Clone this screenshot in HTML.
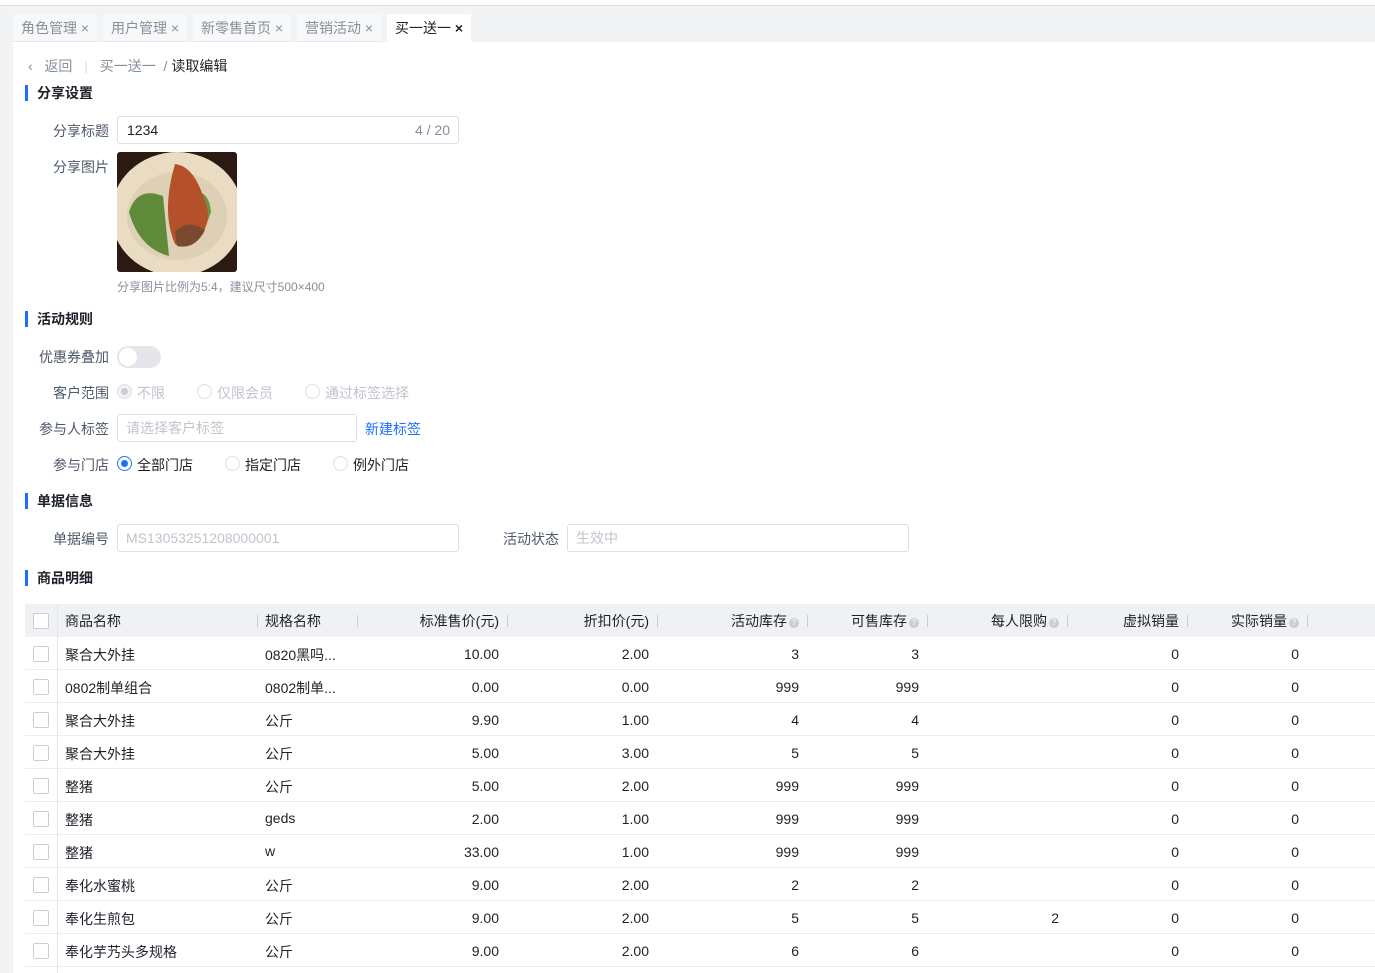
<!DOCTYPE html>
<html><head><meta charset="utf-8"><style>
*{margin:0;padding:0;box-sizing:border-box}
body{width:1375px;height:973px;overflow:hidden;background:#f2f3f5;font-family:"Liberation Sans","Noto Sans CJK SC",sans-serif;font-size:14px;color:#1d2129;position:relative}
.a{position:absolute;white-space:nowrap}
.tab{position:absolute;top:14px;height:28px;background:#f7f8fa;border-bottom:1px solid #e5e6eb;color:#86909c;font-size:14px;line-height:28px;padding-left:8px}
.tab.on{background:#fff;color:#1d2129;border-bottom:none}
.main{position:absolute;left:13px;top:42px;width:1362px;height:931px;background:#fff}
.sec{position:absolute;left:25px;font-weight:bold;font-size:14px;padding-left:12px;line-height:16px}
.sec:before{content:"";position:absolute;left:0;top:0;width:3px;height:16px;background:#1e6fff}
.lbl{position:absolute;text-align:right;width:100px;color:#4e5969}
.inp{position:absolute;border:1px solid #dcdfe6;border-radius:3px;height:28px;line-height:26px;padding-left:8px;color:#c0c4cc}
.rad{position:absolute;width:15px;height:15px;border:1px solid #dcdfe6;border-radius:50%;background:#fff}
.th{position:absolute;top:605px;height:33px;line-height:33px}
.cb{position:absolute;left:33px;width:16px;height:16px;border:1px solid #c9cdd4;border-radius:2px;background:#fff}
.sep{position:absolute;width:1px;height:12px;background:#c9cdd4;top:615px}
.q{display:inline-block;width:10px;height:10px;border-radius:50%;background:#c9cdd4;color:#fff;font-size:8px;line-height:10px;text-align:center;vertical-align:1px;margin-left:2px}
</style></head><body>
<div class="a" style="left:0;top:0;width:1375px;height:6px;background:#fff;border-bottom:1px solid #dcdfe6"></div>
<div class="tab" style="left:13px;width:84px">角色管理 ×</div>
<div class="tab" style="left:103px;width:84px">用户管理 ×</div>
<div class="tab" style="left:193px;width:98px">新零售首页 ×</div>
<div class="tab" style="left:297px;width:84px">营销活动 ×</div>
<div class="tab on" style="left:387px;width:84px">买一送一 <b>×</b></div>
<div class="main"></div>

<div class="a" style="left:28px;top:56px;color:#86909c">‹&nbsp;&nbsp; 返回 <span style="color:#dcdfe6;margin:0 8px">|</span> 买一送一 &nbsp;/ <span style="color:#1d2129">读取编辑</span></div>

<div class="sec" style="top:85px">分享设置</div>
<div class="lbl" style="left:9px;top:121px">分享标题</div>
<div class="inp" style="left:117px;top:116px;width:342px;color:#1d2129;padding-left:9px">1234<span style="position:absolute;right:8px;color:#86909c">4 / 20</span></div>
<div class="lbl" style="left:9px;top:157px">分享图片</div>
<svg class="a" style="left:117px;top:152px" width="120" height="120" viewBox="0 0 120 120">
<rect width="120" height="120" rx="3" fill="#2a1a12"/>
<ellipse cx="60" cy="62" rx="66" ry="62" fill="#e9dcc3"/>
<ellipse cx="60" cy="64" rx="50" ry="44" fill="#ddd0b4"/>
<path d="M12 60 Q20 34 46 44 L52 104 Q22 96 12 60Z" fill="#5f8a3a"/>
<path d="M72 40 Q92 36 94 60 L86 82 Z" fill="#6a9440"/>
<path d="M58 12 Q76 14 86 44 Q96 64 86 80 Q72 100 58 92 Q44 60 58 12Z" fill="#b4502a"/>
<path d="M58 80 Q70 66 88 78 Q78 98 60 94Z" fill="#7a4a30"/>
</svg>
<div class="a" style="left:117px;top:278px;font-size:12px;color:#86909c">分享图片比例为5:4，建议尺寸500×400</div>

<div class="sec" style="top:311px">活动规则</div>
<div class="lbl" style="left:9px;top:347px">优惠券叠加</div>
<div class="a" style="left:117px;top:346px;width:44px;height:22px;border-radius:11px;background:#e5e6eb"><div style="position:absolute;left:2px;top:2px;width:18px;height:18px;border-radius:50%;background:#fff"></div></div>
<div class="lbl" style="left:9px;top:383px">客户范围</div>
<div class="rad" style="left:117px;top:384px;background:#f2f3f5"><div style="position:absolute;left:3px;top:3px;width:7px;height:7px;border-radius:50%;background:#c9cdd4"></div></div>
<div class="a" style="left:137px;top:383px;color:#c0c4cc">不限</div>
<div class="rad" style="left:197px;top:384px"></div><div class="a" style="left:217px;top:383px;color:#c0c4cc">仅限会员</div>
<div class="rad" style="left:305px;top:384px"></div><div class="a" style="left:325px;top:383px;color:#c0c4cc">通过标签选择</div>
<div class="lbl" style="left:9px;top:419px">参与人标签</div>
<div class="inp" style="left:117px;top:414px;width:240px">请选择客户标签</div>
<div class="a" style="left:365px;top:419px;color:#1e6fff">新建标签</div>
<div class="lbl" style="left:9px;top:455px">参与门店</div>
<div class="rad" style="left:117px;top:456px;border-color:#1e6fff"><div style="position:absolute;left:3px;top:3px;width:7px;height:7px;border-radius:50%;background:#1e6fff"></div></div>
<div class="a" style="left:137px;top:455px">全部门店</div>
<div class="rad" style="left:225px;top:456px"></div><div class="a" style="left:245px;top:455px">指定门店</div>
<div class="rad" style="left:333px;top:456px"></div><div class="a" style="left:353px;top:455px">例外门店</div>

<div class="sec" style="top:493px">单据信息</div>
<div class="lbl" style="left:9px;top:529px">单据编号</div>
<div class="inp" style="left:117px;top:524px;width:342px">MS13053251208000001</div>
<div class="lbl" style="left:459px;top:529px">活动状态</div>
<div class="inp" style="left:567px;top:524px;width:342px">生效中</div>

<div class="sec" style="top:570px">商品明细</div>

<div class="a" style="left:25px;top:604px;width:1350px;height:33px;background:#f0f1f4"></div>
<div class="a" style="left:57px;top:604px;width:1px;height:369px;background:#e5e6eb"></div>
<div class="cb" style="top:613px"></div>
<div class="th" style="left:65px">商品名称</div>
<div class="sep" style="left:257px"></div>
<div class="th" style="left:265px">规格名称</div>
<div class="sep" style="left:357px"></div>
<div class="th" style="left:399px;width:100px;text-align:right">标准售价(元)</div><div class="sep" style="left:507px"></div>
<div class="th" style="left:549px;width:100px;text-align:right">折扣价(元)</div><div class="sep" style="left:657px"></div>
<div class="th" style="left:699px;width:100px;text-align:right">活动库存<span class="q">?</span></div><div class="sep" style="left:807px"></div>
<div class="th" style="left:819px;width:100px;text-align:right">可售库存<span class="q">?</span></div><div class="sep" style="left:927px"></div>
<div class="th" style="left:959px;width:100px;text-align:right">每人限购<span class="q">?</span></div><div class="sep" style="left:1067px"></div>
<div class="th" style="left:1079px;width:100px;text-align:right">虚拟销量</div><div class="sep" style="left:1187px"></div>
<div class="th" style="left:1199px;width:100px;text-align:right">实际销量<span class="q">?</span></div><div class="sep" style="left:1307px"></div>

<div id="rows"></div>
<script>
var d=[["聚合大外挂","0820黑吗...","10.00","2.00","3","3",""],
["0802制单组合","0802制单...","0.00","0.00","999","999",""],
["聚合大外挂","公斤","9.90","1.00","4","4",""],
["聚合大外挂","公斤","5.00","3.00","5","5",""],
["整猪","公斤","5.00","2.00","999","999",""],
["整猪","geds","2.00","1.00","999","999",""],
["整猪","w","33.00","1.00","999","999",""],
["奉化水蜜桃","公斤","9.00","2.00","2","2",""],
["奉化生煎包","公斤","9.00","2.00","5","5","2"],
["奉化芋艿头多规格","公斤","9.00","2.00","6","6",""]];
var h="";
d.forEach(function(r,i){var y=637+i*33;
h+='<div class="a" style="left:25px;top:'+(y+32)+'px;width:1350px;height:1px;background:#ebedf0"></div>';
h+='<div class="cb" style="top:'+(y+9)+'px"></div>';
var t='top:'+(y+9)+'px';
h+='<div class="a" style="left:65px;top:'+(y+8)+'px">'+r[0]+'</div>';
h+='<div class="a" style="left:265px;top:'+(y+8)+'px">'+r[1]+'</div>';
var xs=[399,549,699,819,959,1079,1199],v=[r[2],r[3],r[4],r[5],r[6],"0","0"];
for(var k=0;k<7;k++)h+='<div class="a" style="left:'+xs[k]+'px;width:100px;text-align:right;'+t+'">'+v[k]+'</div>';
});
document.getElementById("rows").innerHTML=h;
</script>
</body></html>
